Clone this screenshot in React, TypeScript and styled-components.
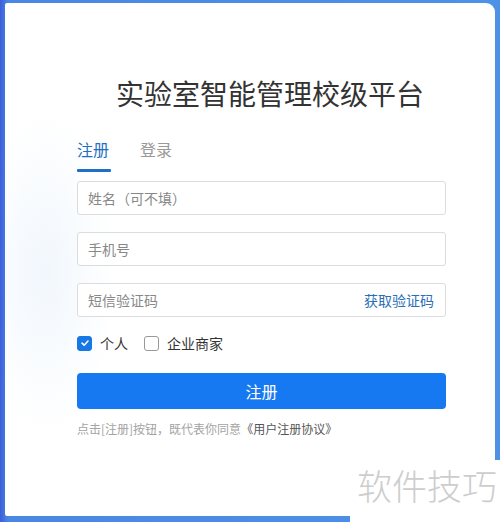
import React from "react";
import styled, { createGlobalStyle } from "styled-components";

const Global = createGlobalStyle`
  html, body { margin: 0; padding: 0; }
  body {
    width: 500px;
    height: 522px;
    overflow: hidden;
    font-family: "Noto Sans CJK SC", "Noto Sans", sans-serif;
  }
`;

const Page = styled.div`
  position: relative;
  box-sizing: border-box;
  width: 500px;
  height: 522px;
  padding: 3px 5px 6px 5px;
  background: linear-gradient(90deg, #3d5ddb 0px, #4a86e4 8px, #4d92e6 100%);
  display: flex;
`;

const Card = styled.div`
  flex: 1;
  background: radial-gradient(ellipse 70px 160px at 40px 270px, #f1f7fd 0%, #ffffff 100%);
  border-radius: 2px 9px 2px 2px;
  display: flex;
  flex-direction: column;
  padding: 70px 0 0 72px;
  box-sizing: border-box;
`;

const Form = styled.div`
  width: 369px;
  display: flex;
  flex-direction: column;
`;

const Title = styled.h1`
  margin: 0 0 0 39px;
  font-size: 28px;
  font-weight: 400;
  line-height: 40px;
  color: #333;
  letter-spacing: 0;
  white-space: nowrap;
`;

const Tabs = styled.div`
  display: flex;
  gap: 31px;
  margin-top: 25px;
`;

const Tab = styled.div<{ $active?: boolean }>`
  font-size: 16px;
  line-height: 22px;
  color: ${(p) => (p.$active ? "#1f6fc5" : "#999")};
  padding-bottom: 10px;
  position: relative;
  &::after {
    content: "";
    display: ${(p) => (p.$active ? "block" : "none")};
    position: absolute;
    left: 0;
    right: -2px;
    bottom: -2px;
    height: 3px;
    background: #1f6fc5;
    border-radius: 1px;
  }
`;

const Fields = styled.div`
  display: flex;
  flex-direction: column;
  gap: 17px;
  margin-top: 11px;
`;

const Field = styled.div`
  box-sizing: border-box;
  height: 34px;
  border: 1px solid #dcdcdc;
  border-radius: 3px;
  display: flex;
  align-items: center;
  justify-content: space-between;
  padding: 0 11px 0 10px;
  background: #fff;
`;

const Placeholder = styled.span`
  font-size: 14px;
  color: #888;
`;

const CodeLink = styled.span`
  font-size: 14px;
  color: #2a6fb8;
`;

const CheckRow = styled.div`
  display: flex;
  align-items: center;
  margin-top: 16px;
  height: 20px;
`;

const Box = styled.span<{ $checked?: boolean }>`
  box-sizing: border-box;
  width: 15px;
  height: 15px;
  border-radius: 3px;
  border: 1px solid ${(p) => (p.$checked ? "#1677e5" : "#999")};
  background: ${(p) => (p.$checked ? "#1677e5" : "#fff")};
  display: inline-flex;
  align-items: center;
  justify-content: center;
  margin-right: 8px;
`;

const CheckLabel = styled.span`
  font-size: 14px;
  color: #333;
  margin-right: 16px;
`;

const Submit = styled.button`
  margin-top: 20px;
  height: 36px;
  border: none;
  border-radius: 4px;
  background: #1779f2;
  color: #fff;
  font-size: 16px;
  font-family: inherit;
  cursor: pointer;
`;

const Agreement = styled.p`
  margin: 11px 0 0;
  font-size: 12px;
  color: #a3a3a3;
  white-space: nowrap;
`;

const AgreementLink = styled.span`
  color: #555;
`;

const Watermark = styled.div`
  position: absolute;
  right: 0;
  bottom: 0;
  width: 150px;
  height: 62px;
  background: #fff;
  display: flex;
  align-items: flex-start;
  justify-content: center;
  font-size: 35px;
  font-weight: 300;
  line-height: 40px;
  padding-top: 5px;
  color: #cdcdcd;
  letter-spacing: 0;
  padding-left: 4px;
  box-sizing: border-box;
`;

export default function App() {
  return (
    <>
      <Global />
      <Page>
        <Card>
          <Form>
            <Title>实验室智能管理校级平台</Title>
            <Tabs>
              <Tab $active>注册</Tab>
              <Tab>登录</Tab>
            </Tabs>
            <Fields>
              <Field>
                <Placeholder>姓名（可不填）</Placeholder>
              </Field>
              <Field>
                <Placeholder>手机号</Placeholder>
              </Field>
              <Field>
                <Placeholder>短信验证码</Placeholder>
                <CodeLink>获取验证码</CodeLink>
              </Field>
            </Fields>
            <CheckRow>
              <Box $checked>
                <svg width="10" height="10" viewBox="0 0 10 10">
                  <path d="M2 5.2 L4.2 7.2 L8 3" fill="none" stroke="#fff" strokeWidth="1.6" strokeLinecap="round" strokeLinejoin="round" />
                </svg>
              </Box>
              <CheckLabel>个人</CheckLabel>
              <Box />
              <CheckLabel>企业商家</CheckLabel>
            </CheckRow>
            <Submit>注册</Submit>
            <Agreement>
              点击[注册]按钮，既代表你同意<AgreementLink>《用户注册协议》</AgreementLink>
            </Agreement>
          </Form>
        </Card>
        <Watermark>软件技巧</Watermark>
      </Page>
    </>
  );
}
